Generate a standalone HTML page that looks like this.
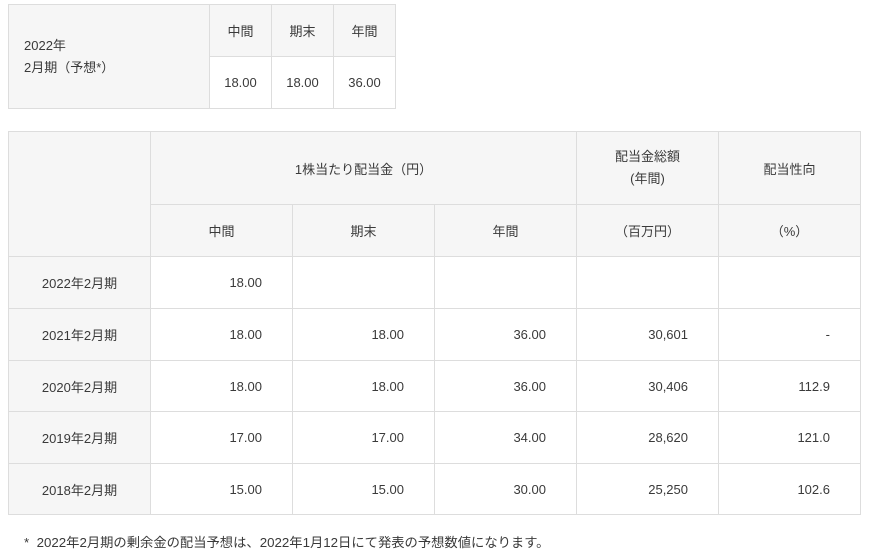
<!DOCTYPE html>
<html><head><meta charset="utf-8"><style>
body{margin:0;width:870px;height:555px;background:#fff;font-family:"Liberation Sans","Noto Sans CJK JP",sans-serif;font-size:13px;color:#3a3a3a;position:relative;overflow:hidden}
.c{position:absolute;box-sizing:border-box;border:1px solid #ddd;display:flex;align-items:center;justify-content:center;background:#fff}
.h{background:#f6f6f6}
.r{justify-content:flex-end;padding-right:30px}
</style></head><body>
<div class="c h" style="left:8px;top:4px;width:202px;height:105px;justify-content:flex-start;padding-left:15px;line-height:22px">2022年<br>2月期（予想*）</div>
<div class="c h" style="left:209px;top:4px;width:63px;height:53px">中間</div>
<div class="c h" style="left:271px;top:4px;width:63px;height:53px">期末</div>
<div class="c h" style="left:333px;top:4px;width:63px;height:53px">年間</div>
<div class="c" style="left:209px;top:56px;width:63px;height:53px">18.00</div>
<div class="c" style="left:271px;top:56px;width:63px;height:53px">18.00</div>
<div class="c" style="left:333px;top:56px;width:63px;height:53px">36.00</div>

<div class="c h" style="left:8px;top:131px;width:143px;height:126px"></div>
<div class="c h" style="left:150px;top:131px;width:427px;height:74px">1株当たり配当金（円）</div>
<div class="c h" style="left:576px;top:131px;width:143px;height:74px;text-align:center;line-height:22px">配当金総額<br>(年間)</div>
<div class="c h" style="left:718px;top:131px;width:143px;height:74px">配当性向</div>
<div class="c h" style="left:150px;top:204px;width:143px;height:53px">中間</div>
<div class="c h" style="left:292px;top:204px;width:143px;height:53px">期末</div>
<div class="c h" style="left:434px;top:204px;width:143px;height:53px">年間</div>
<div class="c h" style="left:576px;top:204px;width:143px;height:53px">（百万円）</div>
<div class="c h" style="left:718px;top:204px;width:143px;height:53px">（%）</div>

<div id="rows"></div>
<script>
var d=[["2022年2月期","18.00","","","",""],["2021年2月期","18.00","18.00","36.00","30,601","-"],["2020年2月期","18.00","18.00","36.00","30,406","112.9"],["2019年2月期","17.00","17.00","34.00","28,620","121.0"],["2018年2月期","15.00","15.00","30.00","25,250","102.6"]];
var tops=[256,308,360,411,463],hs=[53,53,52,53,52],xs=[8,150,292,434,576,718],h="";
d.forEach(function(r,i){r.forEach(function(v,j){h+='<div class="c '+(j==0?'h':'r')+'" style="left:'+xs[j]+'px;top:'+tops[i]+'px;width:143px;height:'+hs[i]+'px">'+v+'</div>';});});
document.getElementById("rows").innerHTML=h;
</script>
<div style="position:absolute;left:24px;top:532px;font-size:13.3px">*&nbsp;&nbsp;2022年2月期の剰余金の配当予想は、2022年1月12日にて発表の予想数値になります。</div>
</body></html>
